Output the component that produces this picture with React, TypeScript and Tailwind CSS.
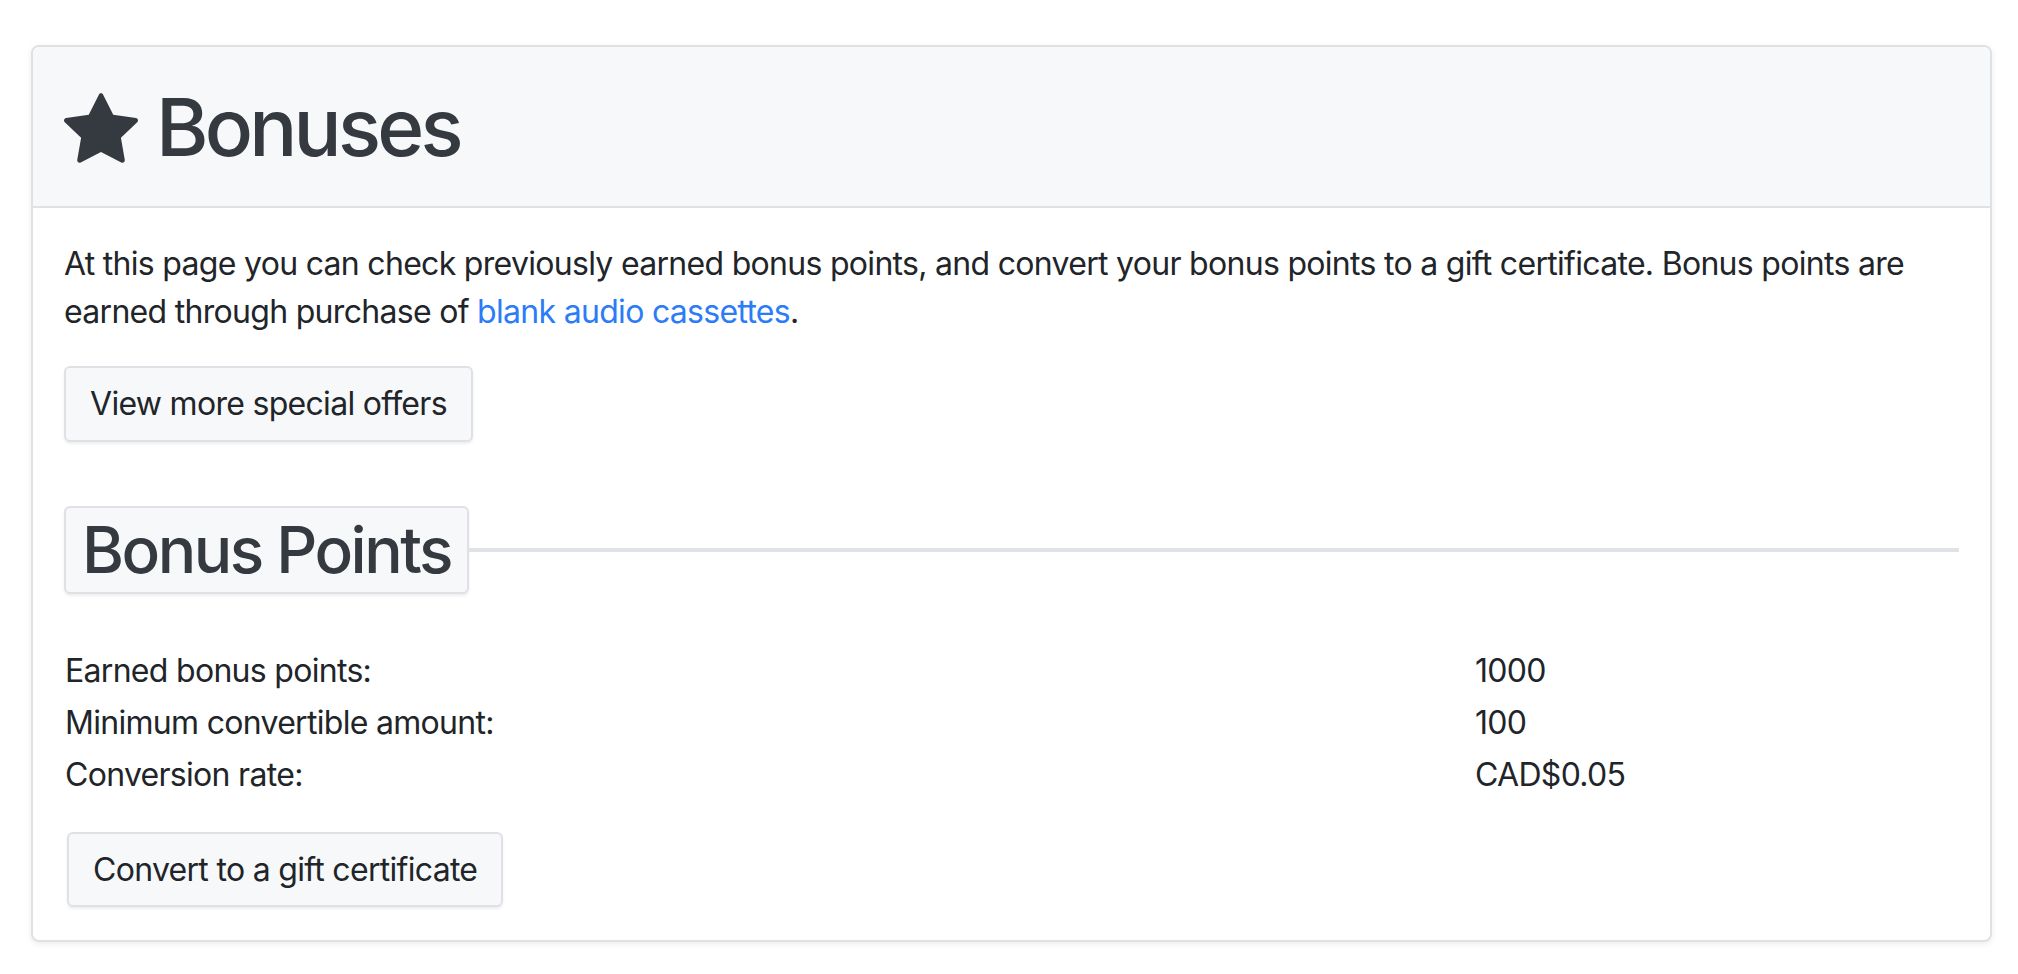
import React from 'react';

const StarIcon: React.FC<{ className?: string }> = ({ className }) => (
  <svg viewBox="0 0 16 16" fill="currentColor" className={className} aria-hidden="true">
    <path d="M3.612 15.443c-.386.198-.824-.149-.746-.592l.83-4.73L.173 6.765c-.329-.314-.158-.888.283-.95l4.898-.696L7.538.792c.197-.39.73-.39.927 0l2.184 4.327 4.898.696c.441.062.612.636.282.95l-3.522 3.356.83 4.73c.078.443-.36.79-.746.592L8 13.187l-4.389 2.256z" />
  </svg>
);

const stats = [
  { label: 'Earned bonus points:', value: '1000' },
  { label: 'Minimum convertible amount:', value: '100' },
  { label: 'Conversion rate:', value: 'CAD$0.05' },
];

export default function App() {
  return (
    <div className="min-h-screen bg-white pt-[45px] pl-[31px] pr-[26px] text-[#212529] font-['Inter','Liberation_Sans',sans-serif] tracking-[-0.7px]">
      <div className="bg-white border-2 border-[#dfe1e5] rounded-[8px] shadow-[0_2px_6px_rgba(0,0,0,0.08)] overflow-hidden">
        {/* Header */}
        <div className="h-[161px] bg-[#f7f8fa] border-b-2 border-[#dfe1e6] flex items-center px-[31px] gap-[18px]">
          <StarIcon className="w-[74px] h-[74px] text-[#343a40] mt-[2px]" />
          <h1 className="text-[80px] leading-none font-medium text-[#343a40] tracking-[-3.8px]">Bonuses</h1>
        </div>

        {/* Body */}
        <div className="px-[31px] pt-[32px] pb-[33px]">
          <p className="text-[32px] leading-[48px]">
            At this page you can check previously earned bonus points, and convert your bonus points to a gift certificate. Bonus points are earned through purchase of{' '}
            <a href="#" className="text-[#2b7cf6]">blank audio cassettes</a>.
          </p>

          <button className="mt-[30px] h-[76px] px-[24px] text-[32px] leading-[48px] bg-[#f7f8fa] border-2 border-[#dfe1e6] rounded-[6px] shadow-[0_2px_3px_rgba(0,0,0,0.07)]">
            View more special offers
          </button>

          {/* Section heading */}
          <div className="mt-[64px] flex items-center">
            <h2 className="h-[88px] flex items-center px-[16px] text-[64px] font-medium text-[#343a40] bg-[#f7f8fa] border-2 border-[#dfe1e6] rounded-[6px] shadow-[0_2px_3px_rgba(0,0,0,0.07)] tracking-[-2.5px]">
              Bonus Points
            </h2>
            <div className="flex-1 h-[4px] bg-[#dfe2e7]" />
          </div>

          <div className="mt-[51px] ml-[1px]">
            {stats.map((s) => (
              <div key={s.label} className="grid grid-cols-[1410px_1fr] h-[52px] items-center text-[32px] leading-[48px]">
                <span>{s.label}</span>
                <span>{s.value}</span>
              </div>
            ))}
          </div>

          <button className="mt-[31px] ml-[3px] h-[75px] px-[24px] text-[32px] leading-[48px] bg-[#f7f8fa] border-2 border-[#dfe1e6] rounded-[6px] shadow-[0_2px_3px_rgba(0,0,0,0.07)]">
            Convert to a gift certificate
          </button>
        </div>
      </div>
    </div>
  );
}
